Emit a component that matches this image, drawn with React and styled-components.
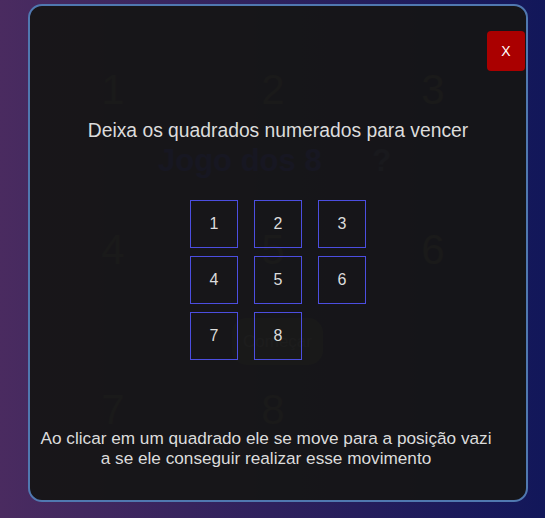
import React from "react";
import styled, { createGlobalStyle } from "styled-components";

const GlobalStyle = createGlobalStyle`
  html, body {
    margin: 0;
    padding: 0;
    height: 100%;
  }
  body {
    font-family: "Liberation Sans", Arial, sans-serif;
    background: linear-gradient(to right, #4a2b60, #12175a);
    overflow: hidden;
  }
`;

const tiles = [1, 2, 3, 4, 5, 6, 7, 8, null];
const boardNumbers = [1, 2, 3, 4, 5, 6, 7, 8, null];

const App = () => {
  return (
    <>
      <GlobalStyle />
      <Page>
        <Board>
          {boardNumbers.map((n, i) => (
            <BoardCell key={i}>{n}</BoardCell>
          ))}
        </Board>
        <Title>
          Jogo dos 8 <span>?</span>
        </Title>
        <StartButton>Começar</StartButton>

        <Modal>
          <CloseButton>X</CloseButton>
          <Heading>Deixa os quadrados numerados para vencer</Heading>
          <Grid>
            {tiles.map((n, i) =>
              n ? <Tile key={i}>{n}</Tile> : <Empty key={i} />
            )}
          </Grid>
          <Footer>
            Ao clicar em um quadrado ele se move para a posição vazia se ele
            conseguir realizar esse movimento
          </Footer>
        </Modal>
      </Page>
    </>
  );
};

export default App;

const Page = styled.div`
  position: relative;
  width: 545px;
  height: 518px;
`;

const Board = styled.div`
  display: grid;
  grid-template-columns: repeat(3, 160px);
  grid-template-rows: repeat(3, 160px);
  padding: 10px 0 0 33px;
`;

const BoardCell = styled.div`
  display: flex;
  align-items: center;
  justify-content: center;
  font-size: 42px;
  font-weight: 300;
  color: #606060;
`;

const Title = styled.h1`
  position: absolute;
  top: 143px;
  left: 158px;
  margin: 0;
  font-size: 31px;
  font-weight: bold;
  color: #3434e0;
  white-space: pre;
  span {
    margin-left: 42px;
    color: #505090;
  }
`;

const StartButton = styled.button`
  position: absolute;
  top: 318px;
  left: 232px;
  width: 91px;
  height: 47px;
  border: none;
  border-radius: 15px;
  background: #5a5a5a;
  color: #909090;
  font-family: "Liberation Sans", Arial, sans-serif;
  font-size: 17px;
`;

const Modal = styled.div`
  position: absolute;
  top: 4px;
  left: 28px;
  width: 496px;
  height: 494px;
  border: 2px solid #5078b0;
  border-radius: 14px;
  background: rgba(21, 21, 21, 0.94);
  display: flex;
  flex-direction: column;
  align-items: center;
  color: #dcdcdc;
`;

const CloseButton = styled.button`
  position: absolute;
  top: 25px;
  right: 1px;
  width: 38px;
  height: 40px;
  border: none;
  border-radius: 4px;
  background: #aa0000;
  color: #ffffff;
  font-family: "Liberation Sans", Arial, sans-serif;
  font-size: 14px;
`;

const Heading = styled.p`
  margin: 114px 0 0;
  font-size: 19.3px;
  line-height: 22px;
  text-align: center;
`;

const Grid = styled.div`
  display: grid;
  grid-template-columns: repeat(3, 48px);
  grid-auto-rows: 48px;
  gap: 8px 16px;
  margin-top: 58px;
`;

const Tile = styled.div`
  box-sizing: border-box;
  border: 1px solid #4c4ee0;
  display: flex;
  align-items: center;
  justify-content: center;
  font-size: 16px;
  color: #dcdcdc;
`;

const Empty = styled.div``;

const Footer = styled.p`
  align-self: stretch;
  margin: 68px 0 0;
  padding: 0 32px 0 8px;
  font-size: 17.2px;
  line-height: 20px;
  text-align: center;
  word-break: break-all;
`;
